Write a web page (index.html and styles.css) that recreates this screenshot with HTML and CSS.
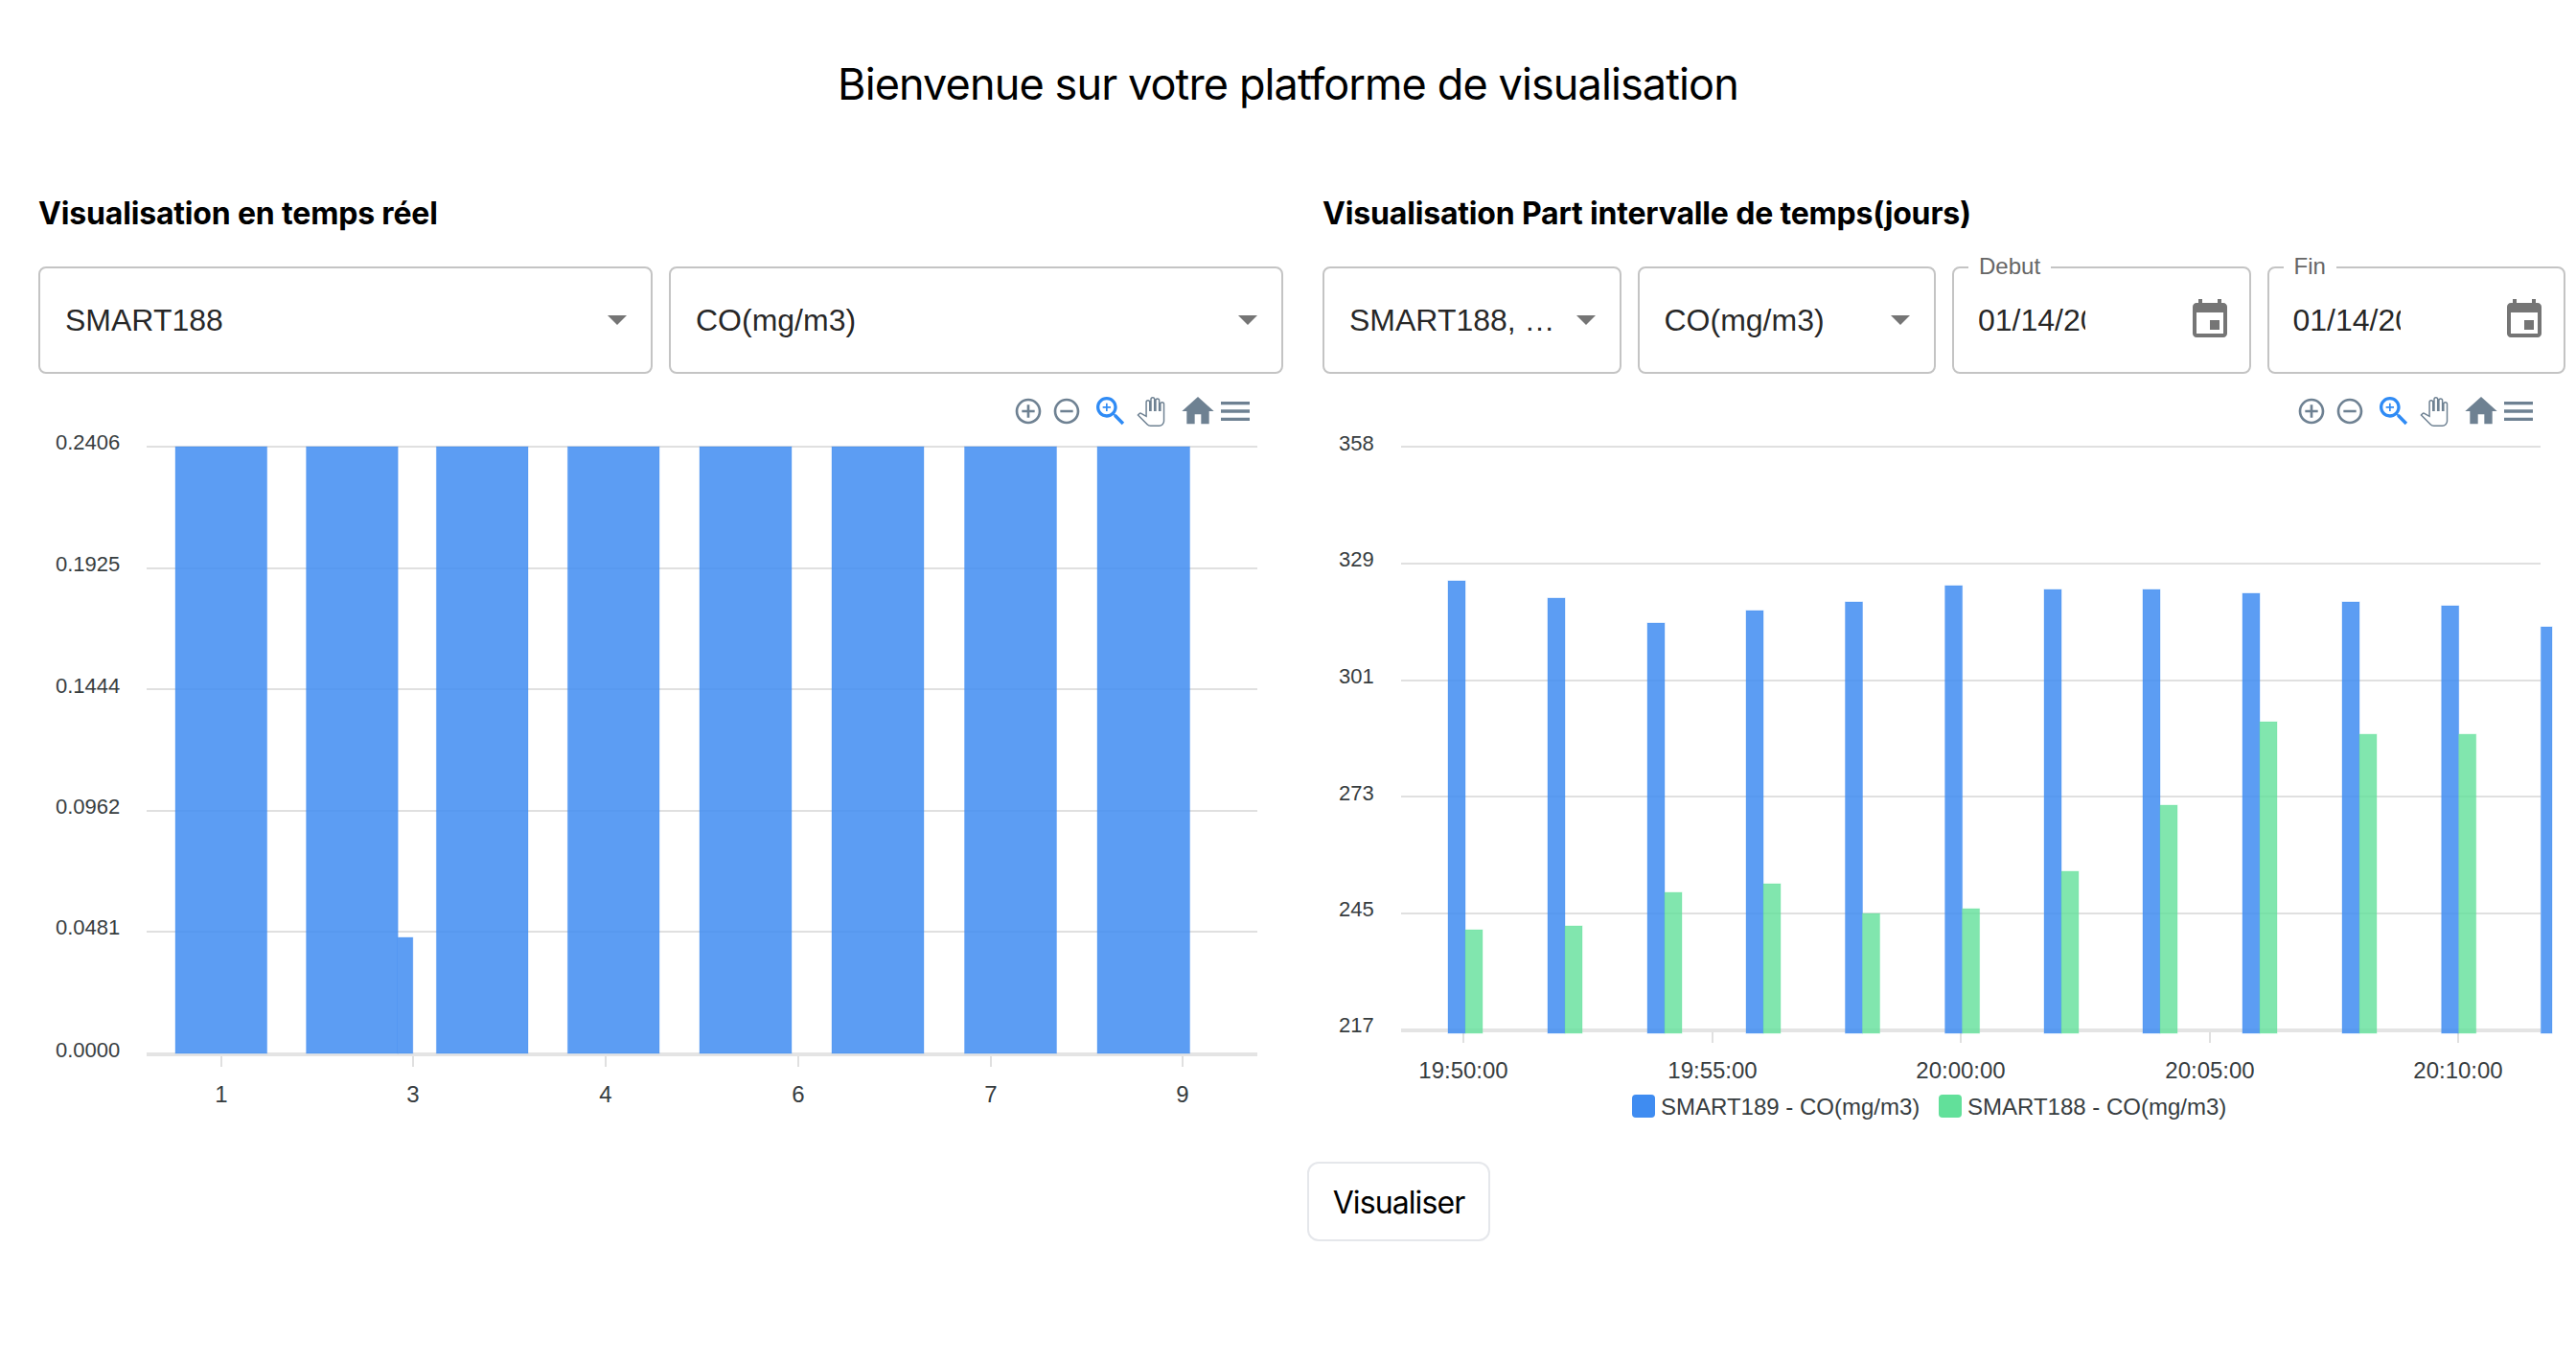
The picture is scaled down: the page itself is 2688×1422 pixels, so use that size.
FILE: index.html
```html
<!DOCTYPE html>
<html lang="fr">
<head>
<meta charset="utf-8">
<title>Visualisation</title>
<link rel="stylesheet" href="styles.css">
</head>
<body>
<h1 class="title">Bienvenue sur votre platforme de visualisation</h1>
<main class="columns">
  <section class="panel">
    <h2 class="panel-title">Visualisation en temps réel</h2>
    <div class="controls">
      <div class="field"><span class="field-text">SMART188</span><span class="caret"></span></div>
      <div class="field"><span class="field-text">CO(mg/m3)</span><span class="caret"></span></div>
    </div>
    <div class="chart">
      <div class="toolbar">
        <svg class="ic ic-plus" viewBox="0 0 24 24"><path d="M13 7h-2v4H7v2h4v4h2v-4h4v-2h-4V7zm-1-5C6.48 2 2 6.48 2 12s4.48 10 10 10 10-4.48 10-10S17.52 2 12 2zm0 18c-4.41 0-8-3.59-8-8s3.59-8 8-8 8 3.59 8 8-3.59 8-8 8z"/></svg>
        <svg class="ic ic-minus" viewBox="0 0 24 24"><path d="M7 11v2h10v-2H7zm5-9C6.48 2 2 6.48 2 12s4.48 10 10 10 10-4.48 10-10S17.52 2 12 2zm0 18c-4.41 0-8-3.59-8-8s3.59-8 8-8 8 3.59 8 8-3.59 8-8 8z"/></svg>
        <svg class="ic ic-zoom" viewBox="0 0 24 24"><path d="M15.5 14h-.79l-.28-.27C15.41 12.59 16 11.11 16 9.5 16 5.91 13.09 3 9.5 3S3 5.91 3 9.5 5.91 16 9.5 16c1.61 0 3.09-.59 4.23-1.57l.27.28v.79l5 4.99L20.49 19l-4.99-5zm-6 0C7.01 14 5 11.99 5 9.5S7.01 5 9.5 5 14 7.01 14 9.5 11.99 14 9.5 14z"/><path d="M12 10h-2v2H9v-2H7V9h2V7h1v2h2v1z"/></svg>
        <svg class="ic-hand" viewBox="0 -0.6 24 25.2"><path d="M23 5.5V20c0 2.2-1.8 4-4 4h-7.3c-1.08 0-2.1-.43-2.85-1.19L1 14.83s1.26-1.23 1.3-1.25c.22-.19.49-.29.79-.29.22 0 .42.06.6.16.04.01 4.31 2.46 4.31 2.46V4c0-.83.67-1.5 1.5-1.5S11 3.17 11 4v7h1V1.5c0-.83.67-1.5 1.5-1.5S15 .67 15 1.5V11h1V2.5c0-.83.67-1.5 1.5-1.5s1.5.67 1.5 1.5V11h1V5.5c0-.83.67-1.5 1.5-1.5s1.5.67 1.5 1.5z"/></svg>
        <svg class="ic ic-home" viewBox="0 0 24 24"><path d="M10 20v-6h4v6h5v-8h3L12 3 2 12h3v8z"/></svg>
        <svg class="ic ic-menu" viewBox="0 0 24 24"><path d="M3 18h18v-2H3v2zm0-5h18v-2H3v2zm0-7v2h18V6H3z"/></svg>
      </div>
      <svg class="plot" viewBox="40 390 1299 810">
        <g class="grid">
          <rect x="153" y="465" width="1159" height="2"/>
          <rect x="153" y="592" width="1159" height="2"/>
          <rect x="153" y="718" width="1159" height="2"/>
          <rect x="153" y="845" width="1159" height="2"/>
          <rect x="153" y="971" width="1159" height="2"/>
          <rect class="axis" x="153" y="1098" width="1159" height="4"/>
          <rect x="230" y="1102" width="2" height="11"/>
          <rect x="430" y="1102" width="2" height="11"/>
          <rect x="631" y="1102" width="2" height="11"/>
          <rect x="832" y="1102" width="2" height="11"/>
          <rect x="1033" y="1102" width="2" height="11"/>
          <rect x="1233" y="1102" width="2" height="11"/>
        </g>
        <g class="bars-blue">
          <rect x="183" y="466" width="95.6" height="633"/>
          <rect x="319.6" y="466" width="95.6" height="633"/>
          <rect x="415.2" y="978" width="15.6" height="121"/>
          <rect x="455.4" y="466" width="95.6" height="633"/>
          <rect x="592.4" y="466" width="95.6" height="633"/>
          <rect x="730" y="466" width="96" height="633"/>
          <rect x="868" y="466" width="96" height="633"/>
          <rect x="1006.5" y="466" width="96" height="633"/>
          <rect x="1145" y="466" width="96.5" height="633"/>
        </g>
        <g class="axis-label">
          <text x="58" y="469">0.2406</text>
          <text x="58" y="596">0.1925</text>
          <text x="58" y="723">0.1444</text>
          <text x="58" y="849">0.0962</text>
          <text x="58" y="975">0.0481</text>
          <text x="58" y="1103">0.0000</text>
        </g>
        <g class="axis-label centered">
          <text x="231" y="1150">1</text>
          <text x="431" y="1150">3</text>
          <text x="632" y="1150">4</text>
          <text x="833" y="1150">6</text>
          <text x="1034" y="1150">7</text>
          <text x="1234" y="1150">9</text>
        </g>
      </svg>
    </div>
  </section>
  <section class="panel">
    <h2 class="panel-title">Visualisation Part intervalle de temps(jours)</h2>
    <div class="controls controls-wide">
      <div class="field"><span class="field-text">SMART188, …</span><span class="caret"></span></div>
      <div class="field"><span class="field-text">CO(mg/m3)</span><span class="caret"></span></div>
      <div class="field field-date">
        <span class="field-label">Debut</span>
        <span class="date-text">01/14/2021</span>
        <svg class="calendar" viewBox="0 0 24 24"><path d="M17 12h-5v5h5v-5zM16 1v2H8V1H6v2H5c-1.11 0-1.99.9-1.99 2L3 19c0 1.1.89 2 2 2h14c1.1 0 2-.9 2-2V5c0-1.1-.9-2-2-2h-1V1h-2zm3 18H5V8h14v11z"/></svg>
      </div>
      <div class="field field-date">
        <span class="field-label">Fin</span>
        <span class="date-text">01/14/2021</span>
        <svg class="calendar" viewBox="0 0 24 24"><path d="M17 12h-5v5h5v-5zM16 1v2H8V1H6v2H5c-1.11 0-1.99.9-1.99 2L3 19c0 1.1.89 2 2 2h14c1.1 0 2-.9 2-2V5c0-1.1-.9-2-2-2h-1V1h-2zm3 18H5V8h14v11z"/></svg>
      </div>
    </div>
    <div class="chart">
      <div class="toolbar">
        <svg class="ic ic-plus" viewBox="0 0 24 24"><path d="M13 7h-2v4H7v2h4v4h2v-4h4v-2h-4V7zm-1-5C6.48 2 2 6.48 2 12s4.48 10 10 10 10-4.48 10-10S17.52 2 12 2zm0 18c-4.41 0-8-3.59-8-8s3.59-8 8-8 8 3.59 8 8-3.59 8-8 8z"/></svg>
        <svg class="ic ic-minus" viewBox="0 0 24 24"><path d="M7 11v2h10v-2H7zm5-9C6.48 2 2 6.48 2 12s4.48 10 10 10 10-4.48 10-10S17.52 2 12 2zm0 18c-4.41 0-8-3.59-8-8s3.59-8 8-8 8 3.59 8 8-3.59 8-8 8z"/></svg>
        <svg class="ic ic-zoom" viewBox="0 0 24 24"><path d="M15.5 14h-.79l-.28-.27C15.41 12.59 16 11.11 16 9.5 16 5.91 13.09 3 9.5 3S3 5.91 3 9.5 5.91 16 9.5 16c1.61 0 3.09-.59 4.23-1.57l.27.28v.79l5 4.99L20.49 19l-4.99-5zm-6 0C7.01 14 5 11.99 5 9.5S7.01 5 9.5 5 14 7.01 14 9.5 11.99 14 9.5 14z"/><path d="M12 10h-2v2H9v-2H7V9h2V7h1v2h2v1z"/></svg>
        <svg class="ic-hand" viewBox="0 -0.6 24 25.2"><path d="M23 5.5V20c0 2.2-1.8 4-4 4h-7.3c-1.08 0-2.1-.43-2.85-1.19L1 14.83s1.26-1.23 1.3-1.25c.22-.19.49-.29.79-.29.22 0 .42.06.6.16.04.01 4.31 2.46 4.31 2.46V4c0-.83.67-1.5 1.5-1.5S11 3.17 11 4v7h1V1.5c0-.83.67-1.5 1.5-1.5S15 .67 15 1.5V11h1V2.5c0-.83.67-1.5 1.5-1.5s1.5.67 1.5 1.5V11h1V5.5c0-.83.67-1.5 1.5-1.5s1.5.67 1.5 1.5z"/></svg>
        <svg class="ic ic-home" viewBox="0 0 24 24"><path d="M10 20v-6h4v6h5v-8h3L12 3 2 12h3v8z"/></svg>
        <svg class="ic ic-menu" viewBox="0 0 24 24"><path d="M3 18h18v-2H3v2zm0-5h18v-2H3v2zm0-7v2h18V6H3z"/></svg>
      </div>
      <svg class="plot" viewBox="1380 390 1298 810">
        <g class="grid">
          <rect x="1462" y="465" width="1189" height="2"/>
          <rect x="1462" y="587" width="1189" height="2"/>
          <rect x="1462" y="709" width="1189" height="2"/>
          <rect x="1462" y="830" width="1189" height="2"/>
          <rect x="1462" y="952" width="1189" height="2"/>
          <rect class="axis" x="1462" y="1073" width="1189" height="4"/>
          <rect x="1526" y="1077" width="2" height="11"/>
          <rect x="1786" y="1077" width="2" height="11"/>
          <rect x="2045" y="1077" width="2" height="11"/>
          <rect x="2305" y="1077" width="2" height="11"/>
          <rect x="2564" y="1077" width="2" height="11"/>
        </g>
        <g class="bars-blue">
          <rect x="1511" y="606" width="18" height="472"/>
          <rect x="1615" y="624" width="18" height="454"/>
          <rect x="1719" y="650" width="18" height="428"/>
          <rect x="1822" y="637" width="18" height="441"/>
          <rect x="1925.5" y="628" width="18" height="450"/>
          <rect x="2029.6" y="611" width="18" height="467"/>
          <rect x="2133" y="615" width="18" height="463"/>
          <rect x="2236" y="615" width="18" height="463"/>
          <rect x="2340" y="619" width="18" height="459"/>
          <rect x="2444" y="628" width="18" height="450"/>
          <rect x="2547.7" y="632" width="18" height="446"/>
          <rect x="2651.4" y="654" width="11.6" height="424"/>
        </g>
        <g class="bars-green">
          <rect x="1529" y="970" width="18" height="108"/>
          <rect x="1633" y="966" width="18" height="112"/>
          <rect x="1737" y="931" width="18" height="147"/>
          <rect x="1840" y="922" width="18" height="156"/>
          <rect x="1943.5" y="953" width="18" height="125"/>
          <rect x="2047.6" y="948" width="18" height="130"/>
          <rect x="2151" y="909" width="18" height="169"/>
          <rect x="2254" y="840" width="18" height="238"/>
          <rect x="2358" y="753" width="18" height="325"/>
          <rect x="2462" y="766" width="18" height="312"/>
          <rect x="2565.7" y="766" width="18" height="312"/>
        </g>
        <g class="axis-label">
          <text x="1397" y="470">358</text>
          <text x="1397" y="591">329</text>
          <text x="1397" y="713">301</text>
          <text x="1397" y="835">273</text>
          <text x="1397" y="956">245</text>
          <text x="1397" y="1077">217</text>
        </g>
        <g class="axis-label centered">
          <text x="1527" y="1125">19:50:00</text>
          <text x="1787" y="1125">19:55:00</text>
          <text x="2046" y="1125">20:00:00</text>
          <text x="2306" y="1125">20:05:00</text>
          <text x="2565" y="1125">20:10:00</text>
        </g>
        <rect class="swatch-blue" x="1703" y="1142" width="24" height="24" rx="4"/>
        <text class="legend-label" x="1733" y="1163">SMART189 - CO(mg/m3)</text>
        <rect class="swatch-green" x="2023" y="1142" width="24" height="24" rx="4"/>
        <text class="legend-label" x="2053" y="1163">SMART188 - CO(mg/m3)</text>
      </svg>
    </div>
  </section>
</main>
<div class="actions"><button class="primary-button" type="button">Visualiser</button></div>
</body>
</html>
```

FILE: styles.css
```css
* { box-sizing: border-box; }
html, body { margin: 0; background: #fff; }
body { width: 2688px; min-height: 1422px; color: #000; font-family: Inter, "Liberation Sans", sans-serif; }

.title {
  margin: 0;
  padding-top: 60px;
  height: 203px;
  font-size: 45px;
  line-height: 56px;
  font-weight: 400;
  letter-spacing: -0.88px;
  text-align: center;
}

.columns {
  display: grid;
  grid-template-columns: 1299px 1298px;
  column-gap: 41px;
  padding-left: 40px;
}

.panel-title {
  margin: 0 0 35px;
  font-size: 32px;
  line-height: 40px;
  font-weight: 700;
  letter-spacing: -0.17px;
}

.controls { display: grid; grid-template-columns: repeat(2, 1fr); column-gap: 17px; }
.controls-wide { grid-template-columns: repeat(4, 1fr); column-gap: 17px; margin-right: 1px; }

.field {
  position: relative;
  min-width: 0;
  height: 112px;
  display: flex;
  align-items: center;
  justify-content: space-between;
  padding: 0 25px 0 26px;
  border: 2px solid #c4c4c4;
  border-radius: 8px;
  font-family: "Liberation Sans", Arial, sans-serif;
  font-size: 32px;
  color: rgba(0, 0, 0, 0.87);
}
.field-text { white-space: nowrap; }

.caret {
  width: 0;
  height: 0;
  border-left: 10px solid transparent;
  border-right: 10px solid transparent;
  border-top: 10px solid #757575;
}

.field-date { padding: 0 17px 0 25px; }
.field-label {
  position: absolute;
  top: -16px;
  left: 15px;
  padding: 0 11px;
  background: #fff;
  color: #666;
  font-size: 24px;
  line-height: 28px;
}
.date-text {
  display: block;
  width: 112px;
  overflow: hidden;
  white-space: nowrap;
}
.calendar { width: 48px; height: 48px; fill: #757575; }

.chart { position: relative; }
.plot { display: block; width: 100%; height: 810px; }

.toolbar {
  position: absolute;
  top: 19px;
  right: 30px;
  display: flex;
  align-items: center;
  height: 40px;
}
.ic { display: block; fill: #6e8192; }
.ic-plus { width: 32px; height: 32px; }
.ic-minus { width: 32px; height: 32px; margin-left: 8px; }
.ic-zoom { width: 40px; height: 40px; margin-left: 10px; fill: #2f8bf5; }
.ic-hand { display: block; width: 30px; height: 31px; margin-left: 7px; fill: none; stroke: #6e8192; stroke-width: 1.2; }
.ic-home { width: 40px; height: 40px; margin-left: 14px; }
.ic-menu { width: 40px; height: 40px; margin-left: -1px; }

.grid rect { fill: #e0e0e0; }
.grid .axis { fill: #e4e4e4; }
.bars-blue rect { fill: rgba(63, 140, 241, 0.85); stroke: rgba(63, 140, 241, 0.3); stroke-width: 1; }
.bars-green rect { fill: rgba(98, 224, 154, 0.8); stroke: rgba(98, 224, 154, 0.3); stroke-width: 1; }
.axis-label text {
  font-family: "Liberation Sans", Arial, sans-serif;
  font-size: 22px;
  fill: #373d3f;
}
.axis-label.centered text { font-size: 24px; text-anchor: middle; }
.legend-label {
  font-family: "Liberation Sans", Arial, sans-serif;
  font-size: 24px;
  fill: #373d3f;
}
.swatch-blue { fill: #3f8cf1; }
.swatch-green { fill: #62e09a; }

.actions { display: flex; padding: 12px 0 0 1364px; }
.primary-button {
  width: 191px;
  height: 83px;
  padding: 2px 0 0;
  background: #fff;
  border: 2px solid #e5e7eb;
  border-radius: 12px;
  font-family: Inter, "Liberation Sans", sans-serif;
  font-size: 32px;
  letter-spacing: -0.9px;
  color: #000;
}
```
